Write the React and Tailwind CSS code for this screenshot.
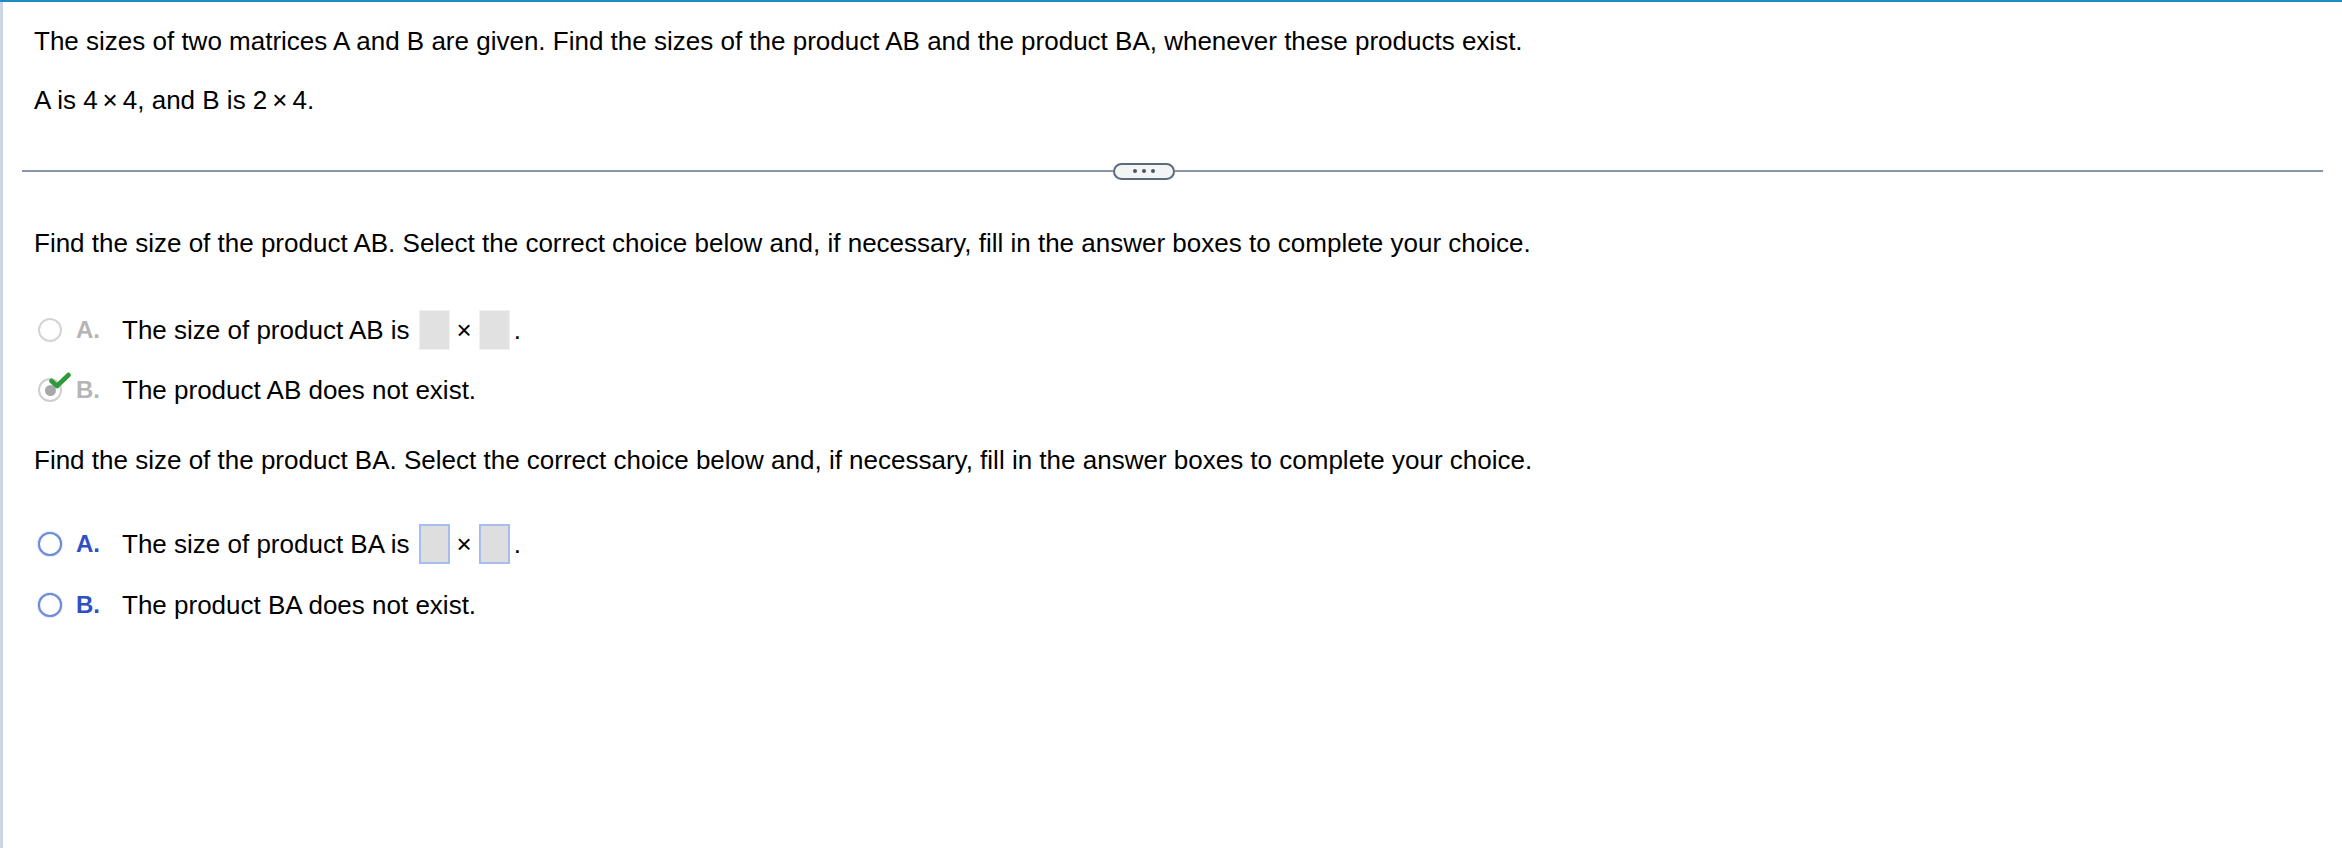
import React from "react";

const font = { fontFamily: '"Liberation Sans", Arial, Helvetica, sans-serif' };

function Radio({ variant }) {
  if (variant === "disabled") {
    return <div className="w-[24px] h-[24px] rounded-full border-2 border-[#d4d4d4] bg-white shrink-0" />;
  }
  if (variant === "checked") {
    return (
      <div className="relative w-[24px] h-[24px] shrink-0">
        <div className="w-[24px] h-[24px] rounded-full border-2 border-[#cfcfcf] bg-white flex items-center justify-center">
          <div className="w-[11px] h-[11px] rounded-full bg-[#a8a8a8]" />
        </div>
        <svg className="absolute left-[11px] top-[-6px]" width="22" height="18" viewBox="0 0 22 18">
          <path d="M2.5 9 L8 14 L19.5 3" fill="none" stroke="#2f9a3c" strokeWidth="4.6" strokeLinecap="round" strokeLinejoin="round" />
        </svg>
      </div>
    );
  }
  return <div className="w-[24px] h-[24px] rounded-full border-2 border-[#6d8ddb] bg-white shrink-0 shadow-[0_0_1.5px_#6d8ddb]" />;
}

function Box({ active }) {
  return active ? (
    <span className="block w-[31px] h-[40px] bg-[#dedede] border-2 border-[#a6bdf0]" />
  ) : (
    <span className="block w-[31px] h-[40px] bg-[#e1e1e1] border border-[#eef1f5]" />
  );
}

function Option({ radio, label, active, children, className }) {
  return (
    <div className={"flex items-center h-[40px] " + className}>
      <div className="ml-[4px]">
        <Radio variant={radio} />
      </div>
      <span
        className={
          "ml-[14px] w-[46px] text-[24px] font-bold leading-[30px] " +
          (active ? "text-[#2f4fc4]" : "text-[#b5b5b5]")
        }
      >
        {label}
      </span>
      <div className="flex items-center text-[26px] leading-[30px] text-black">{children}</div>
    </div>
  );
}

export default function App() {
  return (
    <div style={font} className="w-[2342px] h-[848px] bg-white border-t-2 border-[#1f8bc0] overflow-hidden">
      <div className="h-[846px] border-l-[3px] border-[#cdd6e3] pt-[24px] pl-[31px]">
        <p className="text-[26px] leading-[30px] text-black">
          The sizes of two matrices A and B are given. Find the sizes of the product AB and the product BA, whenever these products exist.
        </p>
        <p className="mt-[29px] text-[26px] leading-[30px] text-black">
          A is 4<span className="mx-[5px]">×</span>4, and B is 2<span className="mx-[5px]">×</span>4.
        </p>

        <div className="mt-[47px] ml-[-12px] mr-[19px] flex items-center h-[18px]">
          <div className="w-[1091px] h-[2px] bg-[#8a95a5]" />
          <div className="w-[62px] h-[17px] rounded-full border-2 border-[#5a6a7a] bg-[#f3f4f6] flex items-center justify-center gap-[5px]">
            <span className="w-[4px] h-[4px] rounded-full bg-[#4b5563]" />
            <span className="w-[4px] h-[4px] rounded-full bg-[#4b5563]" />
            <span className="w-[4px] h-[4px] rounded-full bg-[#4b5563]" />
          </div>
          <div className="flex-1 h-[2px] bg-[#8a95a5]" />
        </div>

        <p className="mt-[48px] text-[26px] leading-[30px] text-black">
          Find the size of the product AB. Select the correct choice below and, if necessary, fill in the answer boxes to complete your choice.
        </p>

        <Option radio="disabled" label="A." className="mt-[52px]">
          <span>The size of product AB is</span>
          <span className="ml-[9px]"><Box /></span>
          <span className="mx-[7px]">×</span>
          <Box />
          <span className="ml-[4px]">.</span>
        </Option>
        <Option radio="checked" label="B." className="mt-[20px]">
          <span>The product AB does not exist.</span>
        </Option>

        <p className="mt-[35px] text-[26px] leading-[30px] text-black">
          Find the size of the product BA. Select the correct choice below and, if necessary, fill in the answer boxes to complete your choice.
        </p>

        <Option radio="blue" label="A." active className="mt-[49px]">
          <span>The size of product BA is</span>
          <span className="ml-[9px]"><Box active /></span>
          <span className="mx-[7px]">×</span>
          <Box active />
          <span className="ml-[4px]">.</span>
        </Option>
        <Option radio="blue" label="B." active className="mt-[21px]">
          <span>The product BA does not exist.</span>
        </Option>
      </div>
    </div>
  );
}
